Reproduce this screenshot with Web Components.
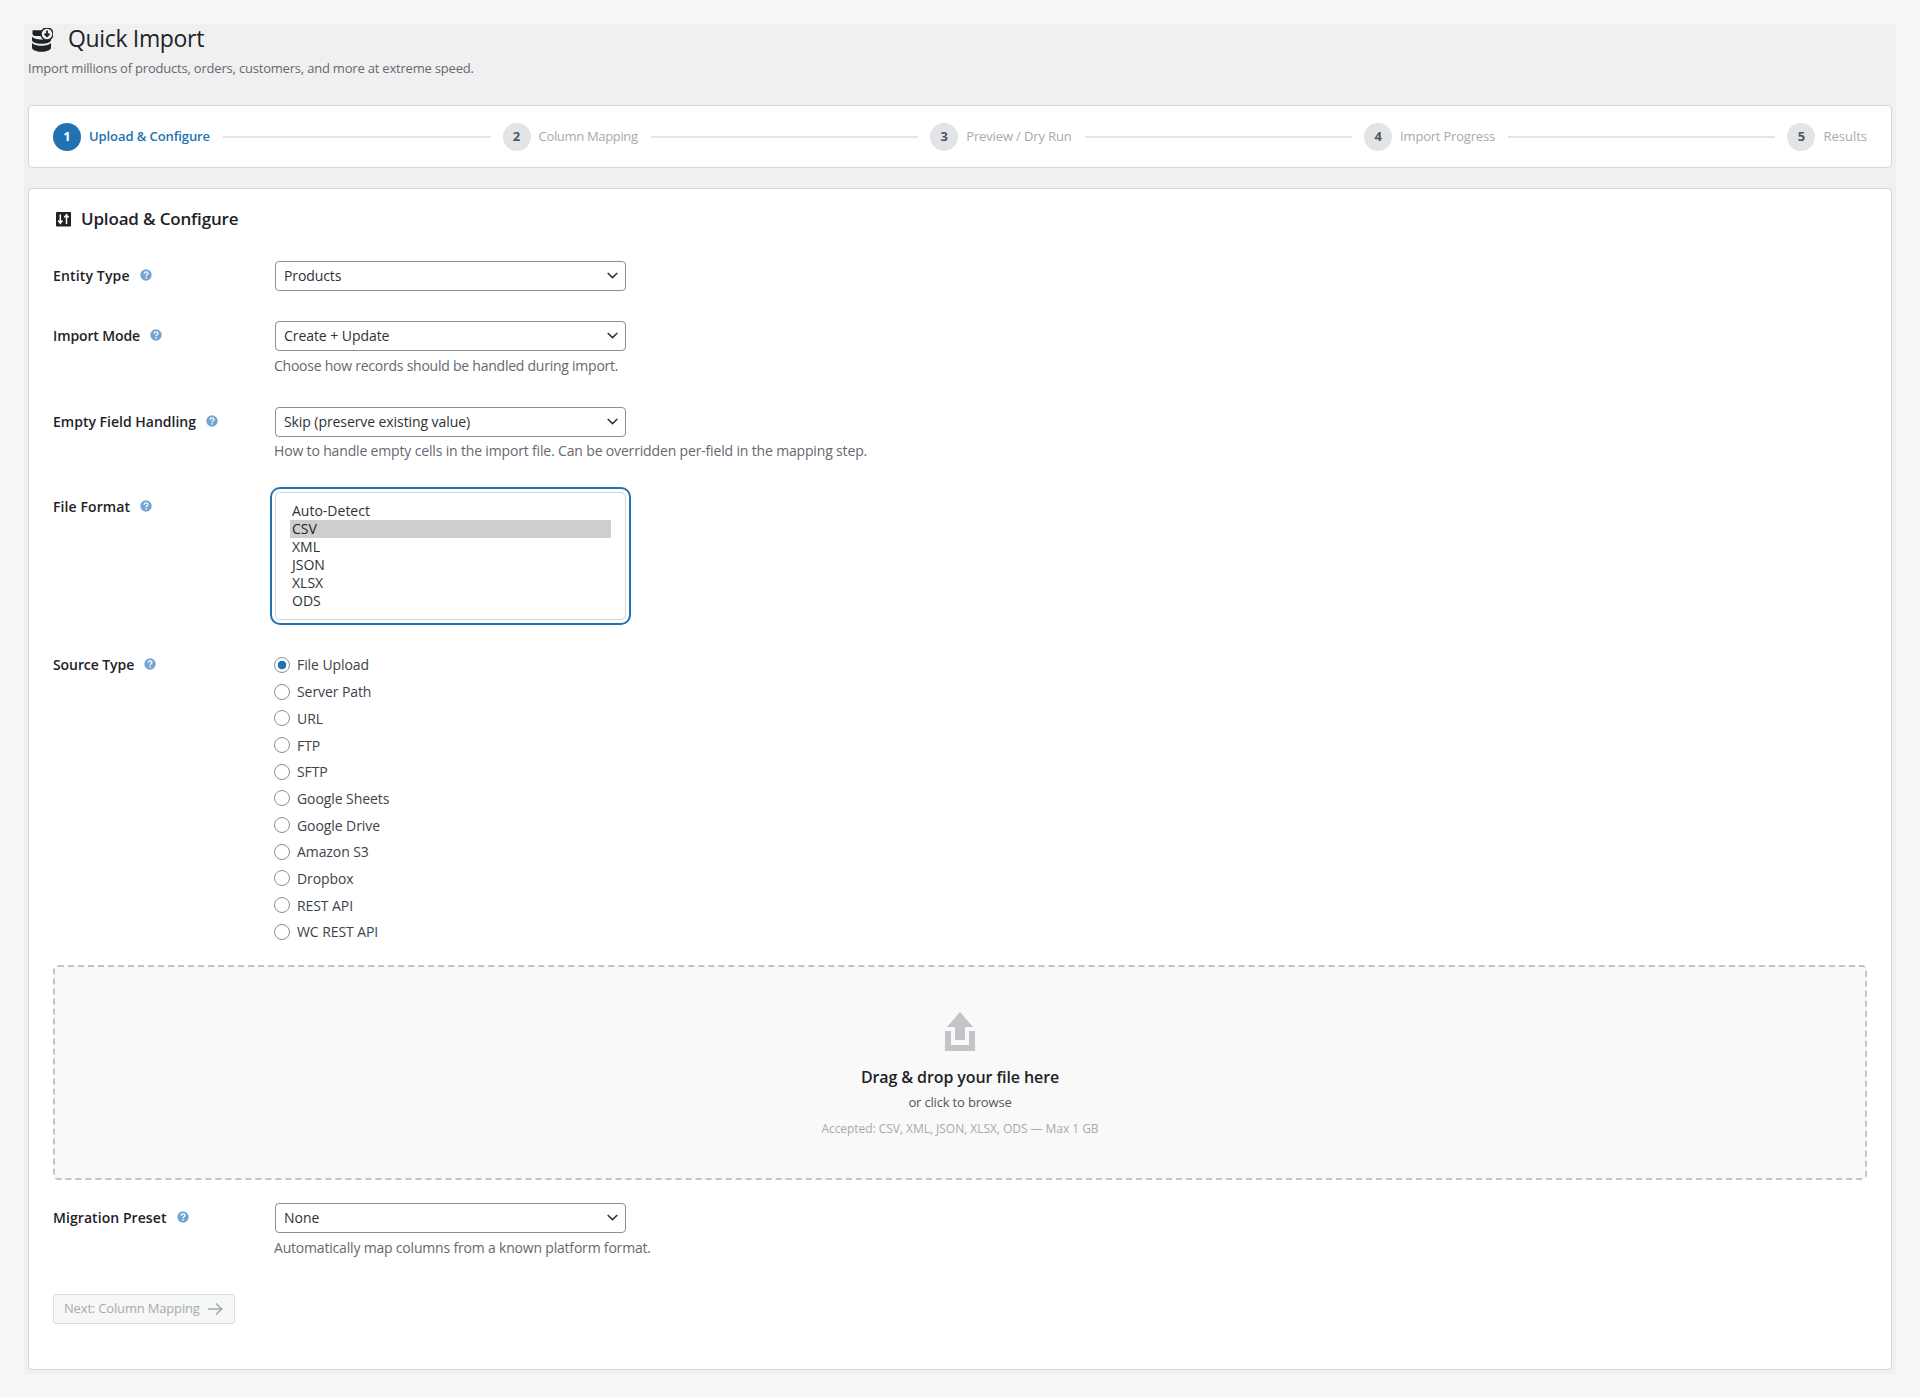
<!doctype html>
<html lang="en"><head><meta charset="utf-8"><title>Quick Import</title>
<style>
html,body{margin:0;padding:0;background:#f6f7f8;font-family:"Open Sans","Noto Sans",sans-serif;color:#1d2327}
</style></head>
<body>
<qi-page>
  <qi-header title="Quick Import" sub="Import millions of products, orders, customers, and more at extreme speed."></qi-header>
  <qi-stepper>
    <qi-step n="1" active style="--ls:-.09px">Upload &amp; Configure</qi-step>
    <qi-step n="2" style="--ls:-.33px">Column Mapping</qi-step>
    <qi-step n="3" style="--ls:-.14px">Preview / Dry Run</qi-step>
    <qi-step n="4" style="--ls:-.2px">Import Progress</qi-step>
    <qi-step n="5" last style="--ls:0">Results</qi-step>
  </qi-stepper>
  <qi-card heading="Upload &amp; Configure">
    <qi-field label="Entity Type" labells=".15px" style="margin-top:30px"><qi-select value="Products" style="--ls:-.1px"></qi-select></qi-field>
    <qi-field label="Import Mode" labells="-.12px" style="margin-top:30px" desc="Choose how records should be handled during import." descls="-.24px"><qi-select value="Create + Update" style="--ls:-.06px"></qi-select></qi-field>
    <qi-field label="Empty Field Handling" style="margin-top:32px" desc="How to handle empty cells in the import file. Can be overridden per-field in the mapping step." descls="-.16px" descmt="4px"><qi-select value="Skip (preserve existing value)" style="--ls:-.08px"></qi-select></qi-field>
    <qi-field label="File Format" labells=".1px" style="margin-top:32px"><qi-listbox selected="CSV" options="Auto-Detect,CSV,XML,JSON,XLSX,ODS"></qi-listbox></qi-field>
    <qi-field label="Source Type" labells="-.08px" style="margin-top:30px">
      <qi-radios options="File Upload,Server Path,URL,FTP,SFTP,Google Sheets,Google Drive,Amazon S3,Dropbox,REST API,WC REST API" selected="File Upload"></qi-radios>
    </qi-field>
    <qi-dropzone></qi-dropzone>
    <qi-field label="Migration Preset" labells=".07px" style="margin-top:23px" desc="Automatically map columns from a known platform format." descls="-.19px"><qi-select value="None"></qi-select></qi-field>
    <qi-button style="margin-top:37px">Next: Column Mapping</qi-button>
  </qi-card>
</qi-page>
<script>
function def(name, html, init){
  const t=document.createElement('template'); t.innerHTML=html;
  customElements.define(name, class extends HTMLElement{
    constructor(){super();this.attachShadow({mode:'open'}).appendChild(t.content.cloneNode(true));}
    connectedCallback(){ if(init&&!this._i){this._i=1;init(this,this.shadowRoot);} }
  });
}
const FONT='"Open Sans","Noto Sans",sans-serif';

def('qi-page',`<style>
:host{display:block;margin:24px 24px 25px;padding:0 4px 4px;background:#f0f0f1;box-sizing:border-box;font-family:${FONT};color:#1d2327}
</style><slot></slot>`);

def('qi-header',`<style>
:host{display:block;margin-bottom:26px}
.row{display:flex;align-items:center;height:28px;padding-left:4px;gap:15px}
svg{display:block;flex:none;margin-top:4px}
h1{margin:0;font-size:23px;font-weight:400;line-height:28px;letter-spacing:-.34px;color:#1d2327}
p{margin:6px 0 0;font-size:13px;line-height:20px;letter-spacing:-.2px;color:#646970;padding-bottom:1px}
</style>
<div class="row">
<svg width="21" height="24" viewBox="0 0 21 24" fill="#1d2327" aria-hidden="true">
<path d="M1 2.200h10v5.800H2.500C1.200 7.600.5 6.800.5 5.500V3.200c0-.6.2-1 .5-1z"/>
<path d="M0 8.600c1.100 2 5 3 9.500 3s8.400-1 9.500-3v3.400c0 2.300-4.300 3.800-9.500 3.800S0 14.300 0 12z"/>
<path d="M0 14.800c1.100 2 5 3 9.500 3s8.400-1 9.500-3v4.700c0 2.600-4.300 4.300-9.500 4.300S0 22.100 0 19.500z"/>
<circle cx="15" cy="6" r="6" fill="#f0f0f1" stroke="#1d2327" stroke-width="1.400"/>
<path d="M15 2.600v5.200M12.500 5.600l2.500 2.700 2.500-2.700" fill="none" stroke="#1d2327" stroke-width="1.800"/>
</svg>
<h1></h1></div><p></p>`,(h,r)=>{r.querySelector('h1').textContent=h.getAttribute('title');r.querySelector('p').textContent=h.getAttribute('sub');});

def('qi-stepper',`<style>
:host{display:flex;align-items:center;box-sizing:border-box;height:63px;padding:0 24px;background:#fff;border:1px solid #d3d5d8;border-radius:4px;margin-bottom:20px}
</style><slot></slot>`);

def('qi-step',`<style>
:host{display:flex;align-items:center;flex:1 1 auto;font-size:13px;color:#a7aaad}
:host([last]){flex:none}
.n{flex:none;width:28px;height:28px;border-radius:50%;background:#e2e4e7;color:#50575e;font-size:13px;line-height:26px;font-weight:700;text-align:center}
.l{margin-left:8px;white-space:nowrap;line-height:20px;letter-spacing:var(--ls,0);padding-bottom:2px}
.line{flex:1;height:2px;background:#e2e4e7;margin:1px 12px 0 13px}
:host([last]) .line{display:none}
:host([active]) .n{background:#2271b1;color:#fff}
:host([active]) .l{color:#2271b1;font-weight:600}
</style><span class="n"></span><span class="l"><slot></slot></span><span class="line"></span>`,(h,r)=>{r.querySelector('.n').textContent=h.getAttribute('n');});

def('qi-card',`<style>
:host{display:block;box-sizing:border-box;background:#fff;border:1px solid #d3d5d8;border-radius:4px;padding:18px 24px 45px}
h2{margin:0;display:flex;align-items:center;gap:8px;font-size:17px;font-weight:600;line-height:24px;letter-spacing:-.17px;color:#1d2327}
svg{display:block;flex:none}
</style>
<h2><svg width="20" height="20" viewBox="0 0 20 20" aria-hidden="true">
<rect x="3" y="3" width="15" height="14.500" rx="1" fill="#1d2327"/>
<path d="M7.300 5.500v8.500M5.200 11.500l2.100 2.700 2.100-2.700M13.500 15v-8.700M11.400 8.500l2.100-2.700 2.100 2.700" fill="none" stroke="#fff" stroke-width="1.500"/>
</svg><span class="t"></span></h2><slot></slot>`,(h,r)=>{r.querySelector('.t').textContent=h.getAttribute('heading');});

def('qi-field',`<style>
:host{display:grid;grid-template-columns:221px minmax(0,1fr)}
.lab{display:flex;align-items:center;height:30px;font-size:14px;font-weight:600;gap:10px;color:#1d2327;white-space:nowrap}
.x{padding-bottom:1px}
svg{display:block;flex:none;position:relative;top:-1px}
.d{margin:5px 0 0;font-size:14px;line-height:19px;color:#646970;white-space:nowrap}
.d:empty{display:none}
</style>
<div class="lab"><span class="x"></span><svg width="12" height="12" viewBox="0 0 12 12" aria-hidden="true"><circle cx="6" cy="6" r="5.700" fill="#72a5d3"/><path d="M4.100 4.700c.1-1.200 1-1.900 2-1.900s1.900.7 1.900 1.700c0 1.300-1.900 1.400-1.900 2.700" fill="none" stroke="#fff" stroke-width="1.300"/><rect x="5.400" y="8.200" width="1.400" height="1.400" fill="#fff"/></svg></div>
<div><slot></slot><p class="d"></p></div>`,(h,r)=>{const x=r.querySelector('.x');x.textContent=h.getAttribute('label');x.style.letterSpacing=h.getAttribute('labells')||'0';const d=r.querySelector('.d');d.textContent=h.getAttribute('desc')||'';d.style.letterSpacing=h.getAttribute('descls')||'0';if(h.getAttribute('descmt'))d.style.marginTop=h.getAttribute('descmt');});

def('qi-select',`<style>
:host{display:block;position:relative;width:351px;height:30px;margin:0 1px}
select{appearance:none;-webkit-appearance:none;display:block;width:100%;height:30px;box-sizing:border-box;padding:0 24px 2px 8px;margin:0;background:#fff;border:1px solid #8c8f94;border-radius:4px;font:14px ${FONT};letter-spacing:var(--ls,0);color:#2c3338;outline:none}
svg{position:absolute;right:8px;top:11px;pointer-events:none}
</style><select aria-label="field"><option></option></select>
<svg width="11" height="7" viewBox="0 0 11 7" aria-hidden="true"><path d="M.7 1l4.800 4.600L10.300 1" fill="none" stroke="#2c3338" stroke-width="1.500"/></svg>`,(h,r)=>{r.querySelector('option').textContent=h.getAttribute('value');});

def('qi-listbox',`<style>
:host{display:block;box-sizing:border-box;width:351px;height:128px;margin:0 1px;padding:9px 14px;background:#fff;border:1px solid #d3d5d8;border-radius:5px;box-shadow:0 0 0 3px #fff,0 0 0 5px #2271b1;font-size:14px;color:#2c3338}
div{height:18px;line-height:18px;padding:0 2px;white-space:nowrap}
.on{background:#cecece;color:#1d2327}
</style>`,(h,r)=>{const s=h.getAttribute('selected');h.getAttribute('options').split(',').forEach(o=>{const d=document.createElement('div');d.textContent=o;if(o===s)d.className='on';r.appendChild(d);});});

def('qi-radios',`<style>
:host{display:block;padding-top:1.65px}
label{display:flex;align-items:center;height:26.7px;gap:7px;font-size:14px;letter-spacing:-.08px;color:#3c434a;white-space:nowrap}
input{appearance:none;-webkit-appearance:none;flex:none;width:16px;height:16px;margin:0;box-sizing:border-box;border:1px solid #8c8f94;border-radius:50%;background:#fff}
input:checked{background:radial-gradient(circle,#2271b1 0 4px,#fff 4.600px)}
</style>`,(h,r)=>{const s=h.getAttribute('selected');h.getAttribute('options').split(',').forEach(o=>{const l=document.createElement('label');const i=document.createElement('input');i.type='radio';i.name='src';i.checked=o===s;l.append(i,o);r.appendChild(l);});});

def('qi-dropzone',`<style>
:host{display:flex;flex-direction:column;align-items:center;box-sizing:border-box;height:215px;margin-top:20px;padding-top:45px;background:#f9f9f9;border:2px dashed #c3c4c7;border-radius:5px;text-align:center}
svg{display:block;flex:none}
b{display:block;margin-top:15px;font-size:16px;line-height:22px;font-weight:600;letter-spacing:-.1px;color:#1d2327}
span{display:block;margin-top:4px;font-size:13px;line-height:20px;letter-spacing:-.17px;color:#50575e}
small{display:block;margin-top:8px;font-size:12px;line-height:18px;letter-spacing:-.04px;color:#a7aaad}
</style>
<svg width="30" height="39" viewBox="0 0 30 39" fill="#c3c4c7" aria-hidden="true"><path d="M15 0l13 15h-8v13H10V15H2z"/><path d="M0 19h6v14h18V19h6v20H0z"/></svg>
<b>Drag &amp; drop your file here</b><span>or click to browse</span><small>Accepted: CSV, XML, JSON, XLSX, ODS — Max 1 GB</small>`);

def('qi-button',`<style>
:host{display:block;width:max-content}
button{display:flex;align-items:center;gap:8px;box-sizing:border-box;height:30px;width:182px;padding:0 0 2px 10px;background:#f6f7f7;border:1px solid #dcdcde;border-radius:3px;font:13px ${FONT};letter-spacing:-.17px;color:#a7aaad}
svg{display:block;flex:none;margin-top:2px}
</style><button disabled type="button"><span><slot></slot></span>
<svg width="15" height="14" viewBox="0 0 15 14" aria-hidden="true"><path d="M0 7h13.500M8 1.500L13.800 7 8 12.500" fill="none" stroke="#a7aaad" stroke-width="1.600"/></svg></button>`);
</script>
</body></html>
